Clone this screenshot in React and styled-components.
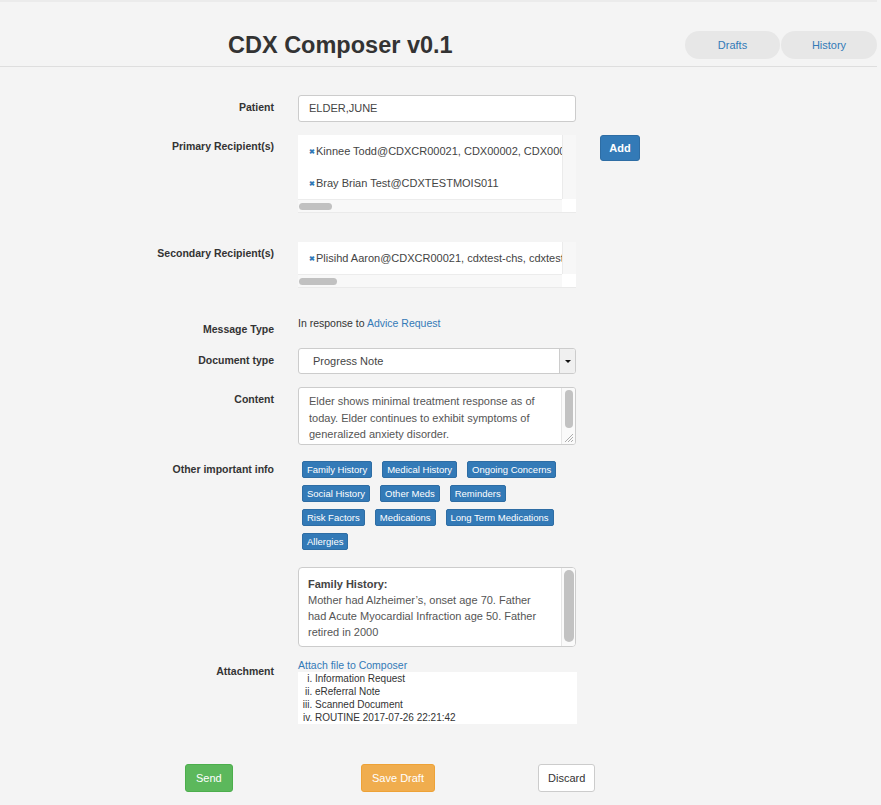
import React from "react";
import styled, { createGlobalStyle } from "styled-components";

const GlobalStyle = createGlobalStyle`
  body {
    margin: 0;
    background: #f4f4f4;
    font-family: "Liberation Sans", Arial, sans-serif;
    color: #333;
  }
`;

const Page = styled.div`
  width: 881px;
  min-height: 805px;
  background: #f4f4f4;
`;

const Header = styled.header`
  display: flex;
  justify-content: space-between;
  align-items: flex-start;
  box-sizing: border-box;
  height: 67px;
  padding: 29px 0 0 228px;
  border-top: 2px solid #ebebeb;
  border-bottom: 1px solid #dedede;
  margin-right: 4px;
`;

const Title = styled.h1`
  margin: 0;
  font-size: 23.5px;
  line-height: 28px;
  font-weight: bold;
  color: #333;
`;

const NavGroup = styled.div`
  display: flex;
  gap: 1px;
`;

const NavPill = styled.button`
  width: ${(p) => p.$w}px;
  height: 28px;
  border: none;
  border-radius: 14px;
  background: #e7e7e7;
  color: #337ab7;
  font-family: inherit;
  font-size: 11px;
`;

const Form = styled.div`
  padding-top: 28px;
`;

const Row = styled.div`
  display: grid;
  grid-template-columns: 274px 278px auto;
  column-gap: 24px;
  align-items: start;
  margin-bottom: ${(p) => p.$mb}px;
`;

const Label = styled.div`
  grid-column: 1;
  text-align: right;
  font-size: 10.5px;
  line-height: 15px;
  font-weight: bold;
  padding-top: ${(p) => (p.$pt !== undefined ? p.$pt : 5)}px;
  color: #333;
`;

const Field = styled.div`
  grid-column: 2;
`;

const TextInput = styled.div`
  box-sizing: border-box;
  height: 27px;
  border: 1px solid #ccc;
  border-radius: 3px;
  background: #fff;
  padding: 0 10px;
  font-size: 11px;
  line-height: 25px;
  color: #444;
`;

const ScrollBox = styled.div`
  display: grid;
  grid-template-columns: 1fr 14px;
  grid-template-rows: auto 13px;
  background: #fff;
  border-bottom: 1px solid #eaeaea;
`;

const ScrollContent = styled.ul`
  margin: 0;
  padding: 0;
  list-style: none;
  overflow: hidden;
  white-space: nowrap;
`;

const Recipient = styled.li`
  height: 32px;
  line-height: 32px;
  padding-left: 11px;
  font-size: 11px;
  color: #444;
`;

const RemoveMark = styled.span`
  color: #337ab7;
  font-size: 7px;
  font-weight: bold;
  margin-right: 1px;
  vertical-align: 1px;
`;

const VTrack = styled.div`
  background: #f7f7f7;
  border-left: 1px solid #ebebeb;
`;

const HTrack = styled.div`
  display: flex;
  align-items: center;
  background: #f8f8f8;
  border-top: 1px solid #ececec;
  padding-left: 1px;
`;

const HThumb = styled.div`
  width: ${(p) => p.$w}px;
  height: 7px;
  border-radius: 4px;
  background: #c1c1c1;
`;

const Corner = styled.div`
  background: #fff;
`;

const AddButton = styled.button`
  grid-column: 3;
  width: 40px;
  height: 26px;
  padding: 0;
  border: 1px solid #2e6da4;
  border-radius: 3px;
  background: #337ab7;
  color: #fff;
  font-family: inherit;
  font-size: 11px;
  font-weight: bold;
`;

const PlainText = styled.div`
  font-size: 10.5px;
  line-height: 14px;
  color: #333;
`;

const Link = styled.a`
  color: #337ab7;
  text-decoration: none;
  font-size: ${(p) => p.$size || 10.5}px;
  line-height: ${(p) => p.$lh || 14}px;
  display: ${(p) => (p.$block ? "block" : "inline")};
`;

const Select = styled.div`
  display: flex;
  box-sizing: border-box;
  height: 26px;
  width: 278px;
  border: 1px solid #ccc;
  border-radius: 3px;
  background: #fff;
  overflow: hidden;
`;

const SelectValue = styled.div`
  flex: 1;
  padding-left: 14px;
  font-size: 11px;
  line-height: 24px;
  color: #444;
`;

const SelectCaret = styled.div`
  width: 15px;
  display: flex;
  align-items: center;
  justify-content: center;
  background: #f0f0f0;
  border-left: 1px solid #ccc;
  &::after {
    content: "";
    border-left: 3px solid transparent;
    border-right: 3px solid transparent;
    border-top: 3px solid #111;
  }
`;

const TextBox = styled.div`
  display: grid;
  grid-template-columns: 1fr 14px;
  box-sizing: border-box;
  height: ${(p) => p.$h}px;
  border: 1px solid #ccc;
  border-radius: ${(p) => p.$r || 3}px;
  background: #fff;
  overflow: hidden;
`;

const TextBody = styled.div`
  padding: ${(p) => p.$pad};
  font-size: 11px;
  line-height: ${(p) => p.$lh}px;
  color: #555;
  overflow: hidden;
`;

const BoldLine = styled.div`
  font-weight: bold;
  color: #444;
`;

const VScroll = styled.div`
  display: flex;
  flex-direction: column;
  align-items: center;
  border-left: 1px solid #e6e6e6;
  background: #fafafa;
  padding-top: 2px;
`;

const VThumb = styled.div`
  width: ${(p) => p.$w}px;
  height: ${(p) => p.$h}px;
  border-radius: 5px;
  background: #c2c2c2;
`;

const Grip = styled.svg`
  margin-top: auto;
  margin-bottom: 1px;
`;

const Tags = styled.div`
  display: flex;
  flex-wrap: wrap;
  gap: 7px 10px;
  width: 266px;
  padding: 4px 0 0 4px;
`;

const Tag = styled.span`
  box-sizing: border-box;
  height: 17px;
  padding: 0 4px;
  border: 1px solid #2e6da4;
  border-radius: 2px;
  background: #337ab7;
  color: #fff;
  font-size: 9.5px;
  line-height: 15px;
  white-space: nowrap;
`;

const AttachList = styled.ol`
  list-style: lower-roman;
  margin: 0;
  width: 279px;
  box-sizing: border-box;
  padding: 0 0 0 17px;
  background: #fff;
  font-size: 10px;
  line-height: 13px;
  color: #333;
`;

const Footer = styled.div`
  display: grid;
  grid-template-columns: 176px 177px auto;
  padding-left: 185px;
  justify-items: start;
`;

const variants = {
  send: { bg: "#5cb85c", border: "#4cae4c", color: "#fff" },
  draft: { bg: "#f0ad4e", border: "#eea236", color: "#fff" },
  discard: { bg: "#fff", border: "#ccc", color: "#333" },
};

const ActionButton = styled.button`
  height: 28px;
  padding: 0 ${(p) => p.$px}px;
  border-radius: 3px;
  border: 1px solid ${(p) => variants[p.$variant].border};
  background: ${(p) => variants[p.$variant].bg};
  color: ${(p) => variants[p.$variant].color};
  font-family: inherit;
  font-size: 11px;
`;

const tags = [
  "Family History",
  "Medical History",
  "Ongoing Concerns",
  "Social History",
  "Other Meds",
  "Reminders",
  "Risk Factors",
  "Medications",
  "Long Term Medications",
  "Allergies",
];

const attachments = [
  "Information Request",
  "eReferral Note",
  "Scanned Document",
  "ROUTINE 2017-07-26 22:21:42",
];

const RecipientBox = ({ items, thumb }) => (
  <ScrollBox>
    <ScrollContent>
      {items.map((r) => (
        <Recipient key={r}>
          <RemoveMark>✖</RemoveMark>
          {r}
        </Recipient>
      ))}
    </ScrollContent>
    <VTrack />
    <HTrack>
      <HThumb $w={thumb} />
    </HTrack>
    <Corner />
  </ScrollBox>
);

export default function App() {
  return (
    <Page>
      <GlobalStyle />
      <Header>
        <Title>CDX Composer v0.1</Title>
        <NavGroup>
          <NavPill $w={95}>Drafts</NavPill>
          <NavPill $w={96}>History</NavPill>
        </NavGroup>
      </Header>

      <Form>
        <Row $mb={13}>
          <Label>Patient</Label>
          <Field>
            <TextInput>ELDER,JUNE</TextInput>
          </Field>
        </Row>

        <Row $mb={29}>
          <Label $pt={4}>Primary Recipient(s)</Label>
          <Field>
            <RecipientBox
              thumb={33}
              items={["Kinnee Todd@CDXCR00021, CDX00002, CDX00003", "Bray Brian Test@CDXTESTMOIS011"]}
            />
          </Field>
          <AddButton>Add</AddButton>
        </Row>

        <Row $mb={28}>
          <Label $pt={4}>Secondary Recipient(s)</Label>
          <Field>
            <RecipientBox thumb={38} items={["Plisihd Aaron@CDXCR00021, cdxtest-chs, cdxtest"]} />
          </Field>
        </Row>

        <Row $mb={11}>
          <Label $pt={6}>Message Type</Label>
          <Field>
            <PlainText>
              In response to <Link href="#">Advice Request</Link>
            </PlainText>
          </Field>
        </Row>

        <Row $mb={13}>
          <Label>Document type</Label>
          <Field>
            <Select>
              <SelectValue>Progress Note</SelectValue>
              <SelectCaret />
            </Select>
          </Field>
        </Row>

        <Row $mb={12}>
          <Label>Content</Label>
          <Field>
            <TextBox $h={58}>
              <TextBody $pad="5px 10px 0 10px" $lh={16.5}>
                Elder shows minimal treatment response as of today. Elder continues to exhibit
                symptoms of generalized anxiety disorder.
              </TextBody>
              <VScroll>
                <VThumb $w={8} $h={38} />
                <Grip width="10" height="10" viewBox="0 0 10 10">
                  <path d="M9 1 L1 9 M9 4 L4 9 M9 7 L7 9" stroke="#999" strokeWidth="0.8" />
                </Grip>
              </VScroll>
            </TextBox>
          </Field>
        </Row>

        <Row $mb={17}>
          <Label>Other important info</Label>
          <Field>
            <Tags>
              {tags.map((t) => (
                <Tag key={t}>{t}</Tag>
              ))}
            </Tags>
          </Field>
        </Row>

        <Row $mb={12}>
          <Field>
            <TextBox $h={80} $r={4}>
              <TextBody $pad="8px 9px 0 9px" $lh={16}>
                <BoldLine>Family History:</BoldLine>
                Mother had Alzheimer’s, onset age 70. Father had Acute Myocardial Infraction age
                50. Father retired in 2000
              </TextBody>
              <VScroll>
                <VThumb $w={10} $h={72} />
              </VScroll>
            </TextBox>
          </Field>
        </Row>

        <Row $mb={40}>
          <Label $pt={5}>Attachment</Label>
          <Field>
            <Link href="#" $block $size={10.5} $lh={13}>
              Attach file to Composer
            </Link>
            <AttachList>
              {attachments.map((a) => (
                <li key={a}>{a}</li>
              ))}
            </AttachList>
          </Field>
        </Row>

        <Footer>
          <ActionButton $variant="send" $px={10}>Send</ActionButton>
          <ActionButton $variant="draft" $px={10}>Save Draft</ActionButton>
          <ActionButton $variant="discard" $px={9}>Discard</ActionButton>
        </Footer>
      </Form>
    </Page>
  );
}
